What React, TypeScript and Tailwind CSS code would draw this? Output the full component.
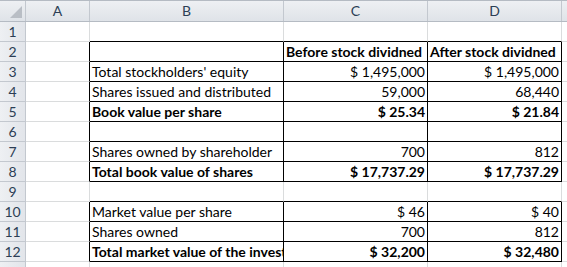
type Row = { label: string; c: string; d: string; bold?: boolean; boxed: boolean };

const rows: Row[] = [
  { label: "", c: "", d: "", boxed: false },
  { label: "", c: "Before stock dividned", d: "After stock dividned", bold: true, boxed: true },
  { label: "Total stockholders' equity", c: "$ 1,495,000", d: "$ 1,495,000", boxed: true },
  { label: "Shares issued and distributed", c: "59,000", d: "68,440", boxed: true },
  { label: "Book value per share", c: "$ 25.34", d: "$ 21.84", bold: true, boxed: true },
  { label: "", c: "", d: "", boxed: true },
  { label: "Shares owned by shareholder", c: "700", d: "812", boxed: true },
  { label: "Total book value of shares", c: "$ 17,737.29", d: "$ 17,737.29", bold: true, boxed: true },
  { label: "", c: "", d: "", boxed: false },
  { label: "Market value per share", c: "$ 46", d: "$ 40", boxed: true },
  { label: "Shares owned", c: "700", d: "812", boxed: true },
  { label: "Total market value of the investment", c: "$ 32,200", d: "$ 32,480", bold: true, boxed: true },
];

const grid = "grid grid-cols-[26px_64px_194px_144px_134px_1fr]";

function ColHead({ text }: { text: string }) {
  return (
    <div className="flex items-center justify-center border-r border-[#c3c8cf] text-[#2c3e55]">
      {text}
    </div>
  );
}

export default function App() {
  return (
    <div className="w-[567px] h-[267px] overflow-hidden bg-white font-['Lato',sans-serif] text-[14px] leading-none">
      {/* column headers */}
      <div className={`${grid} h-[22px] border-t border-b border-[#b5bbc3] bg-gradient-to-b from-[#eef0f3] to-[#dfe3e8]`}>
        <div className="relative border-r border-[#c3c8cf]">
          <div className="absolute right-[3px] bottom-[3px] w-0 h-0 border-l-[12px] border-l-transparent border-b-[12px] border-b-[#b9bec5]" />
        </div>
        <ColHead text="A" />
        <ColHead text="B" />
        <ColHead text="C" />
        <ColHead text="D" />
        <div />
      </div>

      {rows.map((r, i) => {
        const line = r.boxed ? "border-r-black" : "border-r-[#dadcdd]";
        const weight = r.bold ? "font-bold" : "font-normal";
        return (
          <div key={i} className={`${grid} h-[20px]`}>
            <div className="flex items-center justify-center border-r border-b border-[#c3c8cf] bg-gradient-to-r from-[#eef0f3] to-[#e2e5ea] text-[#2c3e55]">
              {i + 1}
            </div>
            <div className={`border-r border-b border-b-[#dadcdd] ${line}`} />
            <div className={`flex items-end overflow-hidden whitespace-nowrap pl-[2px] pb-[2px] border-r border-b border-b-black ${line} ${weight}`}>
              {r.label}
            </div>
            <div
              className={`flex items-end overflow-hidden whitespace-nowrap pb-[2px] border-r border-b border-b-black ${line} ${weight} ${
                i === 1 ? "justify-start pl-[2px]" : "justify-end pr-[2px]"
              }`}
            >
              {r.c}
            </div>
            <div
              className={`flex items-end overflow-hidden whitespace-nowrap pb-[2px] border-r border-b border-b-black ${line} ${weight} ${
                i === 1 ? "justify-start pl-[2px]" : "justify-end pr-[2px]"
              }`}
            >
              {r.d}
            </div>
            <div className="border-b border-[#dadcdd]" />
          </div>
        );
      })}

      {/* partial row 13 */}
      <div className={`${grid} h-[20px]`}>
        <div className="border-r border-[#c3c8cf] bg-gradient-to-r from-[#eef0f3] to-[#e2e5ea]" />
        <div className="border-r border-[#dadcdd]" />
        <div className="border-r border-[#dadcdd]" />
        <div className="border-r border-[#dadcdd]" />
        <div className="border-r border-[#dadcdd]" />
        <div />
      </div>
    </div>
  );
}
